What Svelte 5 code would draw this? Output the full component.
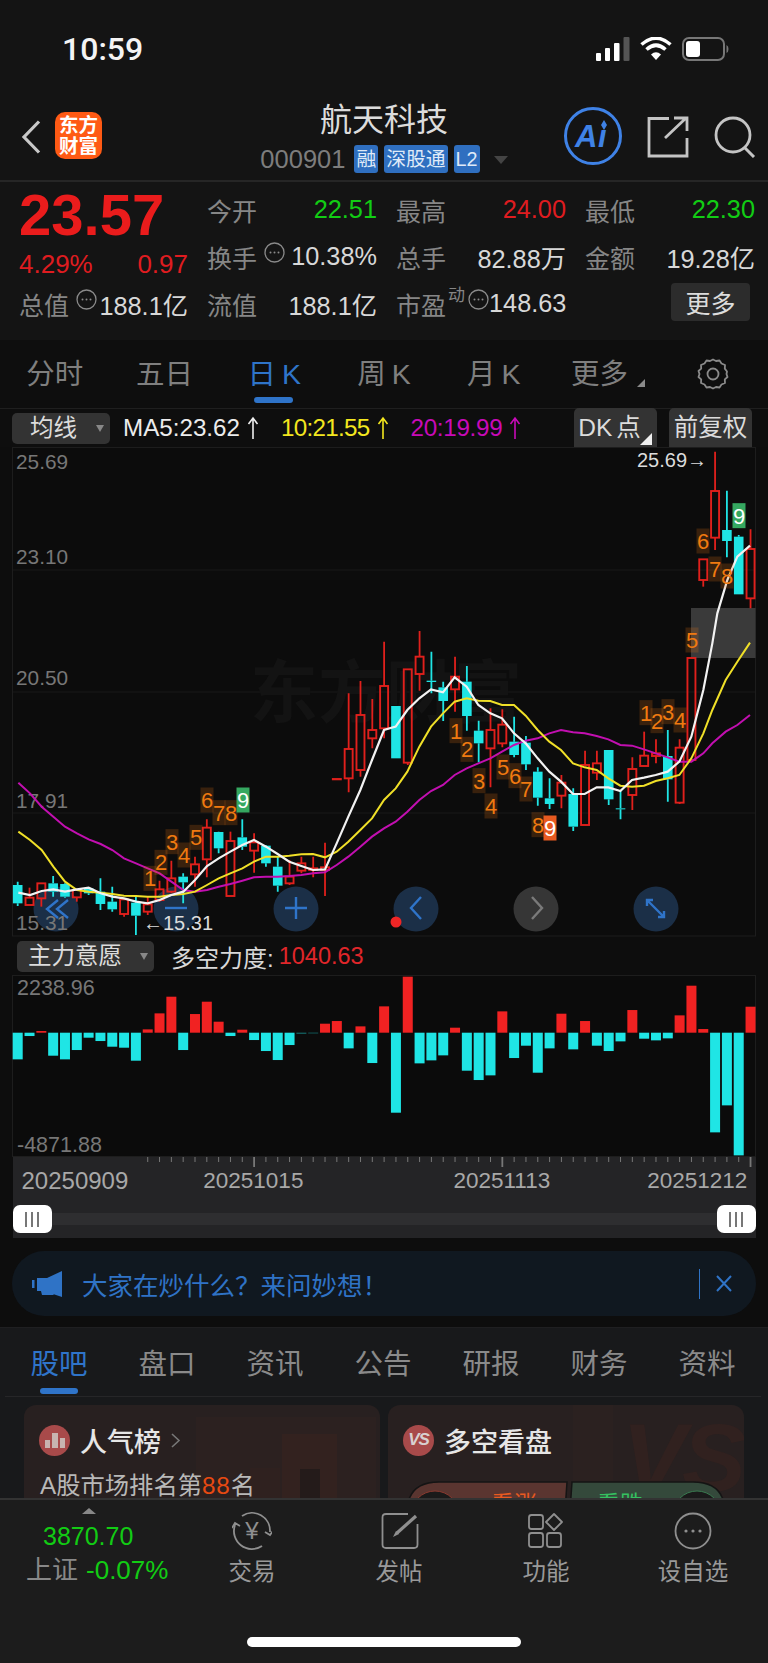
<script>
  const X = (i) => 17.7 + 11.82 * i;
  const Y = (z) => 630 + z / 3;
  // [high, bodyTop, bodyBottom, low, up?] in zoomed chart units
  const c = [
    [755,765,820,828,0],[773,803,825,825,1],[760,760,805,830,1],[738,760,785,800,0],[760,762,800,803,0],
    [780,780,802,815,1],[772,775,790,795,0],[745,785,822,840,0],[770,815,838,845,0],[805,808,852,860,1],
    [795,818,857,915,0],[800,823,845,855,1],[752,778,810,815,1],[692,745,785,790,1],[730,740,757,820,0],
    [680,703,733,770,1],[568,593,688,742,1],[605,606,655,670,0],[605,633,798,798,1],[568,622,650,660,0],
    [610,637,662,728,1],[645,647,700,710,0],[680,710,767,785,0],[690,740,760,765,1],[680,700,722,730,1],
    [680,715,720,742,1],[638,712,720,798,1],[447,447,448,448,1],[190,357,445,487,1],[153,255,420,440,1],
    [207,300,325,355,1],[35,168,295,325,1],[228,228,385,385,0],[118,118,398,405,1],[3,80,132,182,1],
    [65,152,156,190,0],[155,172,213,273,0],[80,140,178,245,1],[108,155,258,302,0],[272,302,340,397,0],
    [235,300,355,472,1],[238,284,340,352,1],[260,335,375,382,0],[318,338,403,420,0],[412,425,503,527,0],
    [445,505,522,537,0],[435,458,497,535,1],[475,492,590,603,0],[362,405,585,585,1],[362,400,428,450,1],
    [360,360,508,525,0],[480,535,538,568,0],[382,417,495,540,1],[305,377,408,408,1],[328,370,378,400,1],
    [300,378,448,515,0],[328,353,518,522,1],[84,84,390,390,1],[-212,-212,-150,-130,1],[-535,-417,-277,-240,1],
    [-418,-300,-267,-218,0],[-285,-280,-107,-107,0],[-302,-243,-95,-65,1]
  ];
  const line = (a, b) => [
    ...a.map(([x, y]) => `${x / 3},${Y(y)}`),
    ...b.map(([x, y]) => `${384 + x / 3},${Y(y)}`)
  ].join(' ');
  const ma5 = line(
    [[55,788],[90,795],[125,783],[160,778],[195,785],[231,778],[266,773],[302,790],[337,800],[372,805],[408,815],[443,820],[479,810],[514,795],[550,785],[585,750],[621,708],[656,685],[691,665],[727,645],[762,630],[798,650],[833,672],[868,695],[904,708],[939,720],[975,718],[1010,640],[1045,560],[1081,480],[1116,390]],
    [[0,300],[35,290],[70,240],[106,205],[141,178],[177,187],[212,142],[248,170],[283,225],[319,250],[354,265],[390,310],[425,340],[461,385],[496,425],[531,455],[567,492],[602,492],[638,472],[673,472],[709,483],[744,450],[780,443],[815,435],[851,425],[886,395],[922,320],[958,180],[985,40],[1000,-50],[1030,-150],[1060,-220],[1098,-253]]
  );
  const ma10 = line(
    [[55,605],[90,630],[125,660],[160,710],[195,755],[231,780],[266,785],[302,788],[337,792],[372,797],[408,798],[443,800],[479,800],[514,795],[550,792],[585,785],[621,765],[656,745],[691,730],[727,715],[762,695],[798,680],[833,680],[868,677],[904,673],[939,672],[975,682],[1010,665],[1045,635],[1081,600],[1116,565]],
    [[0,510],[35,475],[70,425],[106,350],[141,290],[177,250],[212,215],[248,205],[283,212],[319,213],[354,225],[390,225],[425,257],[461,300],[496,335],[531,360],[567,400],[602,412],[638,420],[673,445],[709,467],[744,470],[780,467],[815,453],[851,445],[886,435],[922,385],[958,310],[985,240],[1025,150],[1060,95],[1098,38]]
  );
  const ma20 = line(
    [[55,458],[90,490],[125,530],[160,560],[195,590],[231,610],[266,628],[302,642],[337,660],[372,685],[408,700],[443,715],[479,730],[514,755],[550,780],[585,785],[621,780],[656,770],[691,762],[727,752],[762,742],[798,740],[833,740],[868,738],[904,735],[939,730],[975,727],[1010,705],[1045,680],[1081,650],[1116,620]],
    [[0,595],[35,575],[70,545],[106,510],[141,483],[177,465],[212,435],[248,415],[283,400],[319,385],[354,365],[390,345],[425,332],[461,325],[496,310],[531,300],[567,307],[602,310],[638,318],[673,328],[709,345],[744,347],[780,358],[815,370],[851,382],[886,395],[922,395],[958,370],[985,340],[1025,305],[1060,285],[1098,255]]
  );
  // td marks: x(px), y(px centre), label, kind
  const td = [
    [150,Y(745),'1'],[161,Y(697),'2'],[172,Y(635),'3'],[184,Y(675),'4'],[196,Y(622),'5'],[207,Y(510),'6'],[219,Y(548),'7'],[231,Y(548),'8'],[243,Y(510),'9','g'],
    [456,Y(302),'1'],[467,Y(358),'2'],[479,Y(452),'3'],[491,Y(528),'4'],[503,Y(411),'5'],[515,Y(437),'6'],[526,Y(477),'7'],[538,Y(584),'8'],[550,Y(594),'9','o'],
    [646,Y(248),'1'],[657,Y(272),'2'],[668,Y(245),'3'],[680,Y(270),'4'],[692,Y(30),'5'],
    [703,340+603/3,'6'],[715,340+687/3,'7'],[727,340+708/3,'8'],[739,340+527/3,'9','g']
  ];
  const vals = [-80,-10,5,-69,-80,-52,-15,-25,-42,-45,-84,10,58,108,-52,56,93,33,-10,9,-22,-55,-82,-37,-3,-2,27,35,-47,19,-91,79,-240,168,-92,-83,-68,15,-114,-142,-128,64,-76,-39,-120,-47,57,-50,35,-39,-55,-26,68,-18,-23,-17,52,141,11,-299,-218,-368,78];
  const ticks = Array.from({ length: 52 }, (_, k) => k + 11);
  const major = [20, 41, 62];
  const periods = ['分时', '五日', '日 K', '周 K', '月 K', '更多'];
  const tabs = ['股吧', '盘口', '资讯', '公告', '研报', '财务', '资料'];
</script>

{#snippet dots()}
  <svg class="dots" width="21" height="21" viewBox="0 0 21 21"><circle cx="10.5" cy="10.5" r="9.5" fill="none" stroke="#8a8a8a" stroke-width="1.3"/><circle cx="6.5" cy="10.5" r="1" fill="#8a8a8a"/><circle cx="10.5" cy="10.5" r="1" fill="#8a8a8a"/><circle cx="14.5" cy="10.5" r="1" fill="#8a8a8a"/></svg>
{/snippet}

{#snippet up(color)}
  <svg class="uparrow" width="12" height="24" viewBox="0 0 12 24"><path d="M6 23V2M1.5 8 6 2l4.5 6" fill="none" stroke={color} stroke-width="1.6"/></svg>
{/snippet}

<div class="page">
  <header class="status">
    <span class="time">10:59</span>
    <div class="status-icons">
      <svg width="35" height="24" viewBox="0 0 35 24"><rect x="1" y="16" width="5" height="8" rx="1" fill="#fff"/><rect x="10" y="11" width="5" height="13" rx="1" fill="#fff"/><rect x="19" y="6" width="5.5" height="18" rx="1" fill="#fff"/><rect x="28.5" y="0" width="6" height="24" rx="1" fill="#555"/></svg>
      <svg width="32" height="24" viewBox="0 0 32 24"><path d="M16 23 11 17.5q5-4.4 10 0Z" fill="#fff"/><path d="M6.5 12.5q9.5-8.5 19 0" fill="none" stroke="#fff" stroke-width="3.6"/><path d="M1.5 7.500q14.500-12.500 29 0" fill="none" stroke="#fff" stroke-width="3.600"/></svg>
      <svg width="47" height="24" viewBox="0 0 47 24"><rect x="1" y="1" width="41" height="22" rx="6" fill="none" stroke="#777" stroke-width="2"/><rect x="4" y="4" width="14" height="16" rx="3" fill="#fff"/><path d="M44.500 8q2 1 2 4t-2 4Z" fill="#777"/></svg>
    </div>
  </header>

  <nav class="titlebar">
    <div class="tb-left">
      <svg width="20" height="34" viewBox="0 0 20 34"><path d="M18 1.500 3 17l15 15.500" fill="none" stroke="#c8c8c8" stroke-width="3.200"/></svg>
      <div class="logo"><span>东方</span><span>财富</span></div>
    </div>
    <div class="tb-mid">
      <div class="stock">航天科技</div>
      <div class="sub">
        <span class="code">000901</span>
        <span class="badge">融</span><span class="badge">深股通</span><span class="badge">L2</span>
        <svg class="caret" width="14" height="8" viewBox="0 0 14 8"><path d="M0 0h14L7 8Z" fill="#444"/></svg>
      </div>
    </div>
    <div class="tb-right">
      <svg width="60" height="60" viewBox="0 0 60 60"><circle cx="30" cy="30" r="27.500" fill="none" stroke="#3f82e6" stroke-width="3"/><text x="12" y="41" class="ai">A</text><text x="35" y="41" class="ai">ı</text><path d="M41 14l3 5-3 5-3-5Z" fill="#3f82e6"/></svg>
      <svg width="42" height="42" viewBox="0 0 42 42"><path d="M22 2.500H2V40h38V22M18 22 38 3M27 2h13v13" fill="none" stroke="#c4c4c4" stroke-width="2.800"/></svg>
      <svg width="42" height="42" viewBox="0 0 42 42"><circle cx="19" cy="19" r="17" fill="none" stroke="#c4c4c4" stroke-width="2.800"/><path d="M31 32l9 9" stroke="#c4c4c4" stroke-width="3" fill="none"/></svg>
    </div>
  </nav>

  <section class="stats">
    <div class="price">23.57</div>
    <div class="cell"><span class="lab">今开</span><span class="green">22.51</span></div>
    <div class="cell"><span class="lab">最高</span><span class="red">24.00</span></div>
    <div class="cell"><span class="lab">最低</span><span class="green">22.30</span></div>

    <div class="cell red pct"><span>4.29%</span><span>0.97</span></div>
    <div class="cell"><span class="lab">换手{@render dots()}</span><span>10.38%</span></div>
    <div class="cell"><span class="lab">总手</span><span>82.88万</span></div>
    <div class="cell"><span class="lab">金额</span><span>19.28亿</span></div>

    <div class="cell"><span class="lab">总值{@render dots()}</span><span>188.1亿</span></div>
    <div class="cell"><span class="lab">流值</span><span>188.1亿</span></div>
    <div class="cell"><span class="lab">市盈<sup>动</sup>{@render dots()}</span><span>148.63</span></div>
    <div class="cell more-wrap"><button class="more">更多</button></div>
  </section>

  <div class="periods">
    {#each periods as p, i}
      <div class="period" class:on={i === 2} class:lastp={i === 5}>{p}{#if i === 5}<i class="corner"></i>{/if}</div>
    {/each}
    <div class="period gear">
      <svg width="32" height="32" viewBox="0 0 32 32"><path d="M16 1.500l3 1.500 3.500-.5 2 3 3.500 1.500-.2 3.600L30 13.500 29.500 16l1 3-2.700 2.400.2 3.600-3.500 1.500-2 3-3.500-.5-3 1.500-3-1.500-3.500.5-2-3L4 25l.2-3.600L1.500 19l1-3-1-3 2.700-2.400L4 7l3.500-1.500 2-3 3.500.5Z" fill="none" stroke="#8a8a8a" stroke-width="1.800" stroke-linejoin="round"/><circle cx="16" cy="16" r="5.500" fill="none" stroke="#8a8a8a" stroke-width="1.800"/></svg>
    </div>
  </div>

  <div class="marow">
    <div class="select ma-select">均线<i class="tri"></i></div>
    <span class="ma white">MA5:23.62{@render up('#eee')}</span>
    <span class="ma yellow">10:21.55{@render up('#f3e61f')}</span>
    <span class="ma purple">20:19.99{@render up('#c80ab8')}</span>
    <div class="spacer"></div>
    <div class="tool dk">DK 点<i class="wcorner"></i></div>
    <div class="tool">前复权</div>
  </div>

  <svg class="chart" width="768" height="490" viewBox="0 447 768 490">
    <rect x="12.500" y="447.500" width="743" height="488.500" fill="#0c0c0c" stroke="#1d1d1d"/>
    <path d="M13 570H755M13 692H755M13 813H755" stroke="#191919" stroke-width="1.200"/>
    <text class="wm" x="250" y="717">东方财富</text>
    <rect x="691" y="608" width="64.500" height="50" fill="#3a3a3a"/>
    <text class="ax" x="16" y="469">25.69</text>
    <text class="ax" x="16" y="564">23.10</text>
    <text class="ax" x="16" y="685">20.50</text>
    <text class="ax" x="16" y="808">17.91</text>

    <circle cx="56" cy="909" r="22.500" fill="#1b2f47"/>
    <circle cx="176" cy="909" r="22.500" fill="#1b2f47"/>
    <circle cx="296" cy="909" r="22.500" fill="#1b2f47"/>
    <circle cx="416" cy="909" r="22.500" fill="#1b2f47"/>
    <circle cx="536" cy="909" r="22.500" fill="#363636"/>
    <circle cx="656" cy="909" r="22.500" fill="#1b2f47"/>
    <circle cx="396" cy="922" r="5.500" fill="#ef2525"/>
    <text class="ax" x="16" y="930">15.31</text>

    <g fill="none" stroke="#2f74c9" stroke-width="2.400">
      <path d="M58 900 47 909l11 9M68 900 57 909l11 9"/>
      <path d="M165 908h22"/>
      <path d="M285 908h22M296 897v22"/>
      <path d="M421 897 411 908l10 11"/>
      <path d="M647 900l17 17M647 906v-6h6M664 911v6h-6"/>
    </g>
    <path d="M532 897 542 908 532 919" fill="none" stroke="#7a7a7a" stroke-width="2.400"/>

    {#each c as k, i}
      {@const col = k[4] ? '#e0201c' : '#1fe5e5'}
      <path d="M{X(i)} {Y(k[0])}V{Y(k[1])}M{X(i)} {Y(k[2])}V{Y(k[3])}" stroke={col} stroke-width="1.800" fill="none"/>
      {#if k[4]}
        <rect x={X(i) - 4} y={Y(k[1])} width="8" height={Y(k[2]) - Y(k[1])} fill="none" stroke={col} stroke-width="1.900"/>
      {:else}
        <rect x={X(i) - 4.800} y={Y(k[1])} width="9.600" height={Y(k[2]) - Y(k[1])} fill={col}/>
      {/if}
    {/each}

    <polyline points={ma20} fill="none" stroke="#c20fb0" stroke-width="2"/>
    <polyline points={ma10} fill="none" stroke="#f0e028" stroke-width="2"/>
    <polyline points={ma5} fill="none" stroke="#f2f2f2" stroke-width="2.200"/>

    {#each td as t}
      <rect x={t[0] - 6.500} y={t[1] - 12.500} width="13" height="25" fill={t[3] === 'g' ? '#35a860' : t[3] === 'o' ? '#e85a20' : 'rgba(240,120,20,0.2)'}/>
      <text class="td" class:wtd={t[3]} x={t[0]} y={t[1] + 8}>{t[2]}</text>
    {/each}

    <text class="mark" x="637" y="467">25.69→</text>
    <text class="mark" x="143" y="930">←15.31</text>
  </svg>

  <div class="ind-head">
    <div class="select ind-select">主力意愿<i class="tri"></i></div>
    <span class="ind-name">多空力度:</span>
    <span class="ind-val">1040.63</span>
  </div>

  <svg class="chart" width="768" height="182" viewBox="0 975 768 182">
    <rect x="12.500" y="975.500" width="743" height="181" fill="#0b0b0b" stroke="#1d1d1d"/>
    <text class="ax lg" x="17" y="995">2238.96</text>
    <text class="ax lg" x="17" y="1152">-4871.88</text>
    {#each vals as v, i}
      {#if v > 0}
        <rect x={X(i) - 5} y={1032.700 - v / 3} width="10" height={v / 3} fill="#f12222"/>
      {:else}
        <rect x={X(i) - 5} y="1032.700" width="10" height={-v / 3} fill="#1fe5e5" opacity={v > -4 ? 0.5 : 1}/>
      {/if}
    {/each}
  </svg>

  <div class="timeline">
    <svg class="ticks" width="768" height="11" viewBox="0 0 768 11">
      {#each ticks as t}
        <path d="M{X(t)} 0V{major.includes(t) ? 10 : 5}" stroke="#777" stroke-width={major.includes(t) ? 1.800 : 1}/>
      {/each}
    </svg>
    <div class="dates">
      <span class="d1">20250909</span><span class="d2">20251015</span><span class="d3">20251113</span><span class="d4">20251212</span>
    </div>
    <div class="slider">
      <div class="handle"><i></i><i></i><i></i></div>
      <div class="handle"><i></i><i></i><i></i></div>
    </div>
  </div>

  <div class="banner">
    <svg width="30" height="26" viewBox="0 0 30 26"><path d="M0 9h2.500v8H0ZM5 7h10l15-7v26l-9-3 1 1H10l-1-4H5Z" fill="#2f73c6"/></svg>
    <span class="ban-text">大家在炒什么？来问妙想！</span>
    <div class="spacer"></div>
    <i class="ban-line"></i>
    <svg width="16" height="17" viewBox="0 0 16 17"><path d="M1 1l14 15M15 1 1 16" stroke="#2f73c6" stroke-width="2" fill="none"/></svg>
  </div>

  <section class="panel">
    <div class="tabs">
      {#each tabs as t, i}<div class="tab" class:on={i === 0}>{t}</div>{/each}
    </div>
    <div class="cards">
      <div class="card">
        <i class="wm-block b0"></i><i class="wm-block b1"></i><i class="wm-block b2"></i><i class="wm-block b3"></i>
        <div class="card-title">
          <span class="badge-ic">
            <svg width="20" height="16" viewBox="0 0 20 16"><path d="M0 8h5v8H0ZM7 1h6v15H7ZM15 6h5v10h-5Z" fill="#c8b4b0"/></svg>
          </span>
          <strong>人气榜</strong>
          <svg width="10" height="15" viewBox="0 0 10 15"><path d="M1 1l7 6.500L1 14" fill="none" stroke="#777" stroke-width="1.600"/></svg>
        </div>
        <p class="rank">A股市场排名第<em>88</em>名</p>
      </div>
      <div class="card second">
        <i class="wm-block b4"></i>
        <span class="vs-mark">VS</span>
        <div class="card-title">
          <span class="badge-ic vs">VS</span>
          <strong>多空看盘</strong>
        </div>
        <svg class="vote" width="318" height="60" viewBox="0 0 318 60">
          <path d="M32 1H160L156 60H0V32Q0 1 32 1Z" fill="#5a3530" stroke="#141414" stroke-width="1.500"/>
          <path d="M165 1H286Q318 1 318 32V60H161Z" fill="#34493b" stroke="#141414" stroke-width="1.500"/>
          <circle cx="28" cy="34" r="24" fill="#1a1a1a" stroke="#8a3a30"/>
          <circle cx="290" cy="34" r="24" fill="#1a1a1a" stroke="#3a7a50"/>
          <text class="vt up" x="84" y="31">看涨</text>
          <text class="vt dn" x="190" y="31">看跌</text>
        </svg>
      </div>
    </div>
  </section>

  <footer class="bottom">
    <div class="index">
      <i class="idx-tri"></i>
      <div class="idx-val">3870.70</div>
      <div class="idx-row"><span>上证</span><b>-0.07%</b></div>
    </div>
    <div class="nitem">
      <svg width="40" height="38" viewBox="0 0 40 38"><path d="M10 4A18 18 0 0 1 38 20M30 34A18 18 0 0 1 3 13" fill="none" stroke="#8f8f8f" stroke-width="1.800"/><path d="M0 16 3 11l5 3M33 20l5 3 3-4" fill="none" stroke="#8f8f8f" stroke-width="1.800"/><text class="yen" x="20" y="27">¥</text></svg>
      <span>交易</span>
    </div>
    <div class="nitem">
      <svg width="40" height="38" viewBox="0 0 40 38"><path d="M29 2H7Q3.500 2 3.500 5.500V32.500Q3.500 36 7 36H35Q38.500 36 38.500 32.500V12" fill="none" stroke="#8f8f8f" stroke-width="1.800"/><path d="M18 21 37 4" stroke="#8f8f8f" stroke-width="3.200" fill="none"/><path d="M14 25l3-6 3 3Z" fill="#8f8f8f"/></svg>
      <span>发帖</span>
    </div>
    <div class="nitem">
      <svg width="40" height="38" viewBox="0 0 40 38"><g fill="none" stroke="#8f8f8f" stroke-width="1.800"><rect x="3" y="3" width="14" height="14" rx="2.500"/><rect x="3" y="21" width="14" height="14" rx="2.500"/><rect x="21" y="21" width="14" height="14" rx="2.500"/><path d="M28 2l8 8-8 8-8-8Z" stroke-linejoin="round"/></g></svg>
      <span>功能</span>
    </div>
    <div class="nitem">
      <svg width="40" height="38" viewBox="0 0 40 38"><circle cx="20" cy="19" r="17.500" fill="none" stroke="#8f8f8f" stroke-width="1.800"/><circle cx="13" cy="19" r="1.600" fill="#8f8f8f"/><circle cx="20" cy="19" r="1.600" fill="#8f8f8f"/><circle cx="27" cy="19" r="1.600" fill="#8f8f8f"/></svg>
      <span>设自选</span>
    </div>
    <i class="home"></i>
  </footer>
</div>

<style>
  :global(body) { margin: 0; background: #0d0d0d; }
  .page {
    width: 768px; height: 1663px; overflow: hidden; position: relative;
    font-family: "Liberation Sans", "Noto Sans CJK SC", sans-serif;
    background: #0d0d0d; color: #dedede;
  }
  i { display: block; font-style: normal; }

  .status { height: 97px; background: #141414; display: flex; align-items: flex-start; justify-content: space-between; box-sizing: border-box; padding: 32px 39px 0 62px; }
  .time { font-family: Roboto, "Liberation Sans", sans-serif; font-weight: 500; font-size: 32px; line-height: 34px; color: #f4f4f4; }
  .status-icons { display: flex; gap: 10px; align-items: flex-start; padding-top: 5px; }

  .titlebar { height: 83px; background: #141414; display: grid; grid-template-columns: 1fr auto 1fr; border-bottom: 2px solid #262626; box-sizing: content-box; }
  .tb-left { display: flex; align-items: flex-start; gap: 14px; padding: 23px 0 0 21px; }
  .logo { width: 47px; height: 47px; margin-top: -8px; border-radius: 10px; background: #ff5a14; color: #fff; font-weight: 700; font-size: 19.500px; line-height: 21px; display: flex; flex-direction: column; align-items: center; justify-content: center; }
  .tb-mid { display: flex; flex-direction: column; align-items: center; }
  .stock { font-size: 32px; line-height: 36px; margin-top: 5px; color: #dcdcdc; }
  .sub { display: flex; align-items: center; gap: 6px; margin-top: 7px; }
  .code { font-size: 25.500px; line-height: 28px; color: #7d7d7d; margin-right: 3px; }
  .badge { background: #2f6fc0; border-radius: 3px; color: #dfeaf8; font-size: 19.800px; line-height: 28px; padding: 0 2px; }
  .caret { margin-left: 8px; margin-top: 2px; }
  .tb-right { display: flex; align-items: flex-start; justify-content: flex-end; gap: 19px; padding: 9px 12px 0 0; }
  .tb-right svg:nth-child(2), .tb-right svg:nth-child(3) { margin-top: 10px; }
  .tb-right svg:nth-child(2) { margin-left: 5px; margin-right: 6px; }
  .ai { font: italic 700 31px "Liberation Sans", sans-serif; fill: #3f82e6; }

  .stats { height: 158px; background: #141414; box-sizing: border-box; padding: 4px 13px 0 19px; display: grid; grid-template-columns: 169px 170px 170px 170px; column-gap: 19px; grid-auto-rows: 47px; font-size: 25.300px; }
  .price { font-size: 58px; font-weight: 700; color: #ea1c1c; line-height: 58px; white-space: nowrap; }
  .cell { display: flex; justify-content: space-between; align-items: center; white-space: nowrap; color: #d8d8d8; }
  .cell.pct { padding-top: 16px; box-sizing: border-box; color: #df1c20; font-size: 26px; }
  .lab { color: #868686; display: flex; align-items: center; font-size: 25px; }
  .dots { margin: -8px 0 0 7px; }
  sup { font-size: 17px; line-height: 1; margin: -17px 0 0 2px; }
  .lab sup + .dots { margin-left: 3px; }
  .lab sup { color: #868686; }
  .green { color: #12cc14; }
  .red { color: #df1c20; }
  .more-wrap { justify-content: flex-end; padding-right: 4px; box-sizing: border-box; }
  .more { width: 79px; height: 38px; border: 0; border-radius: 4px; background: #2c2c2c; color: #dcdcdc; font: inherit; font-size: 25px; padding: 0; margin-top: -3px; margin-right: 1px; }

  .periods { height: 68px; display: flex; border-bottom: 1px solid #1f1f1f; background: #0e0e0e; }
  .period { flex: 1; position: relative; text-align: center; font-size: 28.500px; line-height: 69px; color: #7f7f7f; white-space: nowrap; word-spacing: -2px; }
  .period.on { color: #2f74c9; }
  .period.on::after { content: ""; position: absolute; left: 50%; margin-left: -20px; bottom: 5px; width: 39px; height: 6px; border-radius: 3px; background: #2f74c9; }
  .lastp { text-indent: -8px; }
  .corner { position: absolute; left: 88px; top: 39px; width: 0; height: 0; border-left: 8px solid transparent; border-bottom: 8px solid #8a8a8a; }
  .gear { display: flex; justify-content: center; align-items: center; }

  .marow { height: 38px; display: flex; align-items: center; background: #0e0e0e; padding-left: 12px; padding-right: 16px; }
  .select { background: #333; border-radius: 5px; position: relative; box-sizing: border-box; color: #dcdcdc; }
  .ma-select { width: 98px; height: 31px; font-size: 23.500px; line-height: 31px; padding-left: 18px; }
  .tri { position: absolute; width: 0; height: 0; border-left: 4.500px solid transparent; border-right: 4.500px solid transparent; border-top: 7px solid #888; right: 6px; top: 12px; }
  .ma { font-size: 24.200px; display: flex; align-items: center; gap: 7px; white-space: nowrap; }
  .white { margin-left: 13px; color: #ececec; }
  .yellow { margin-left: 22px; color: #f3e61f; letter-spacing: -0.700px; }
  .purple { margin-left: 22px; color: #c80ab8; letter-spacing: -0.300px; }
  .spacer { flex: 1; }
  .tool { width: 83px; height: 39px; margin-top: -1px; border-radius: 5px 5px 0 0; background: #333; color: #dcdcdc; font-size: 24.500px; line-height: 39px; text-align: center; position: relative; white-space: nowrap; }
  .dk { margin-right: 12px; padding-right: 12px; box-sizing: border-box; word-spacing: -3px; }
  .wcorner { position: absolute; right: 5px; bottom: 2px; width: 0; height: 0; border-left: 12px solid transparent; border-bottom: 12px solid #f0f0f0; }

  .chart { display: block; }
  .ax { font-size: 20.800px; fill: #777; }
  .ax.lg { font-size: 21.500px; }
  .wm { font-size: 68px; font-weight: 700; fill: #131313; font-family: "Noto Sans CJK SC", sans-serif; }
  .td { font-size: 22px; fill: #f07a10; text-anchor: middle; }
  .td.wtd { fill: #fff; }
  .mark { font-size: 20px; fill: #dcdcdc; }

  .ind-head { height: 38px; background: #0d0d0d; display: flex; align-items: center; padding-left: 17px; font-size: 24px; }
  .ind-select { width: 137px; height: 31px; line-height: 31px; font-size: 23.500px; padding-left: 11px; }
  .ind-select .tri { right: 6px; top: 12px; }
  .ind-name { margin-left: 17px; color: #d8d8d8; }
  .ind-val { margin-left: 5px; color: #e0262a; font-size: 23.500px; }

  .timeline { height: 81px; margin: 0 12.500px; background: #242426; position: relative; }
  .ticks { position: absolute; left: -12.500px; top: 0; }
  .dates { position: absolute; left: 0; right: 0; top: 11px; height: 28px; display: flex; font-size: 22.500px; line-height: 26px; color: #a8a8a8; }
  .d1 { margin-left: 9px; font-size: 24px; }
  .d2 { margin-left: 75px; }
  .d3 { margin-left: 150px; }
  .d4 { margin-left: 97px; }
  .slider { position: absolute; left: 0; right: 0; top: 56px; height: 12px; background: #2e2e30; display: flex; justify-content: space-between; align-items: center; }
  .handle { width: 39px; height: 28px; flex: none; background: #fff; border-radius: 7px; display: flex; justify-content: center; align-items: center; gap: 4px; }
  .handle i { width: 2px; height: 15px; background: #777; }

  .banner { height: 65px; margin: 13px 12px 0; border-radius: 33px; background: #101820; display: flex; align-items: center; padding: 0 24px 0 20px; }
  .ban-text { margin-left: 20px; font-size: 25.500px; color: #2f73c6; white-space: nowrap; }
  .ban-line { width: 1.500px; height: 30px; background: #2f73c6; margin-right: 16px; }

  .panel { height: 171px; margin-top: 11px; background: #18191b; overflow: hidden; border-top: 1px solid #1f1f21; box-sizing: border-box; }
  .tabs { height: 68px; margin: 0 7px 0 5px; display: flex; border-bottom: 1px solid #262628; }
  .tab { flex: 1; text-align: center; font-size: 28.500px; line-height: 72px; color: #8a8a8a; position: relative; }
  .tab.on { color: #2f74c9; }
  .tab.on::after { content: ""; position: absolute; left: 50%; margin-left: -19px; bottom: 2px; width: 38px; height: 6px; border-radius: 3px; background: #2f74c9; }
  .cards { display: flex; gap: 8px; padding: 8px 24px 0; }
  .card { width: 356px; height: 140px; flex: none; border-radius: 12px; background: #282020; position: relative; overflow: hidden; padding: 19px 15px 0; box-sizing: border-box; }
  .card-title { display: flex; align-items: center; gap: 10px; height: 32px; position: relative; }
  .card-title strong { font-size: 27px; font-weight: 500; color: #e6e6e6; }
  .badge-ic { width: 31px; height: 31px; border-radius: 50%; background: #a84a4a; display: flex; align-items: center; justify-content: center; flex: none; }
  .badge-ic.vs { color: #d8d0d0; font-size: 17px; font-weight: 700; font-style: italic; letter-spacing: -1px; }
  .rank { margin: 10px 0 0 1px; font-size: 24.300px; color: #b8b8b8; position: relative; white-space: nowrap; }
  em { font-style: normal; color: #e84a12; letter-spacing: 0.800px; }
  .wm-block { position: absolute; background: #33221f; }
  .b0 { left: 172px; top: 12px; width: 180px; height: 130px; background: #2c2120; }
  .b1 { left: 258px; top: 29px; width: 55px; height: 80px; }
  .b2 { left: 226px; top: 63px; width: 30px; height: 50px; background: #2f211f; }
  .b3 { left: 276px; top: 64px; width: 20px; height: 50px; background: #241b1a; }
  .b4 { left: 185px; top: 0; width: 40px; height: 140px; background: #2b2120; }
  .vs-mark { position: absolute; right: 2px; top: 3px; font-size: 96px; line-height: 100px; font-weight: 700; font-style: italic; letter-spacing: -4px; color: #31211f; }
  .vote { position: absolute; left: 19px; top: 76px; }
  .vt { font-size: 23px; }
  .vt.up { fill: #e85a20; }
  .vt.dn { fill: #35c060; }

  .bottom { height: 165px; background: #1c1c1c; border-top: 2px solid #333; box-sizing: border-box; display: flex; position: relative; }
  .index { width: 178.500px; flex: none; box-sizing: border-box; padding: 8px 0 0 26px; }
  .idx-tri { width: 0; height: 0; margin-left: 56px; border-left: 7px solid transparent; border-right: 7px solid transparent; border-bottom: 6px solid #888; }
  .idx-val { margin: 7px 0 0 17px; font-size: 25px; line-height: 30px; color: #12cc14; }
  .idx-row { display: flex; gap: 8px; font-size: 26px; line-height: 36px; margin-top: 1px; color: #888; }
  .idx-row b { font-weight: 400; color: #12cc14; font-size: 26px; }
  .nitem { width: 147px; flex: none; display: flex; flex-direction: column; align-items: center; padding-top: 12px; box-sizing: border-box; color: #999; font-size: 23.500px; line-height: 30px; }
  .nitem span { margin-top: 7px; }
  .yen { font-size: 24px; fill: #8f8f8f; text-anchor: middle; }
  .home { position: absolute; left: 247px; top: 137px; width: 274px; height: 10px; border-radius: 5px; background: #fff; }
</style>
